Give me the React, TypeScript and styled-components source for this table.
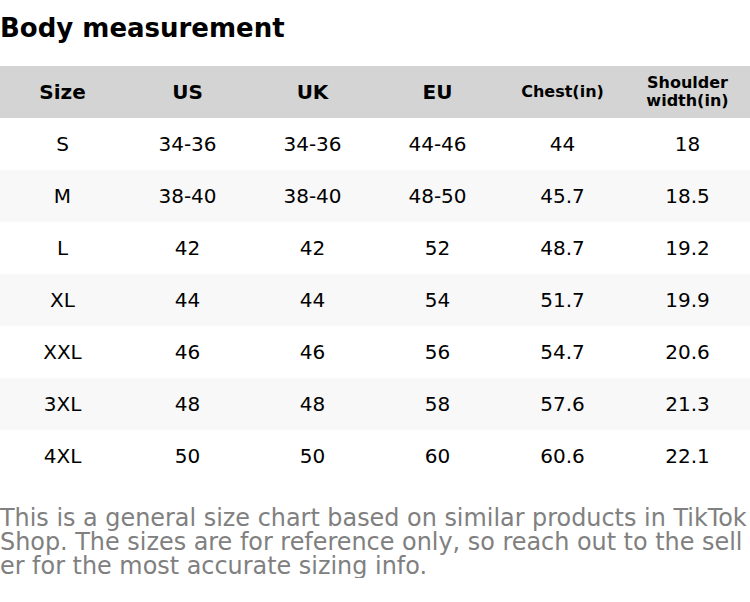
import React from "react";
import styled, { createGlobalStyle } from "styled-components";

const Global = createGlobalStyle`
  html, body { margin: 0; padding: 0; background: #fff; }
  body { font-family: "DejaVu Sans", sans-serif; }
`;

const Page = styled.div`
  width: 750px;
  display: flex;
  flex-direction: column;
`;

const Title = styled.h1`
  margin: 0;
  height: 66px;
  display: flex;
  align-items: center;
  padding-bottom: 10px;
  box-sizing: border-box;
  font-size: 26px;
  font-weight: bold;
  color: #000;
`;

const Row = styled.div<{ $bg: string }>`
  display: grid;
  grid-template-columns: repeat(6, 125px);
  height: 52px;
  background: ${(p) => p.$bg};
`;

const Cell = styled.div<{ $head?: boolean; $small?: boolean }>`
  display: flex;
  align-items: center;
  justify-content: center;
  text-align: center;
  color: #000;
  font-size: ${(p) => (p.$small ? "16px" : "20px")};
  font-weight: ${(p) => (p.$head ? "bold" : "normal")};
  line-height: ${(p) => (p.$small ? "18px" : "24px")};
`;

const Note = styled.p`
  margin: 24px 0 0;
  font-size: 23.9px;
  line-height: 24px;
  font-family: "DejaVu Sans", sans-serif;
  color: #808080;
  word-break: break-all;
`;

const heads = ["Size", "US", "UK", "EU", "Chest(in)", "Shoulder width(in)"];
const rows = [
  ["S", "34-36", "34-36", "44-46", "44", "18"],
  ["M", "38-40", "38-40", "48-50", "45.7", "18.5"],
  ["L", "42", "42", "52", "48.7", "19.2"],
  ["XL", "44", "44", "54", "51.7", "19.9"],
  ["XXL", "46", "46", "56", "54.7", "20.6"],
  ["3XL", "48", "48", "58", "57.6", "21.3"],
  ["4XL", "50", "50", "60", "60.6", "22.1"],
];

export default function App() {
  return (
    <Page>
      <Global />
      <Title>Body measurement</Title>
      <Row $bg="#d4d4d4">
        {heads.map((h, i) => (
          <Cell key={h} $head $small={i >= 4}>
            {h}
          </Cell>
        ))}
      </Row>
      {rows.map((r, i) => (
        <Row key={r[0]} $bg={i % 2 ? "#f8f8f8" : "#fff"}>
          {r.map((c, j) => (
            <Cell key={j}>{c}</Cell>
          ))}
        </Row>
      ))}
      <Note>
        This is a general size chart based on similar products in TikTok Shop. The sizes are for reference only, so reach out to the seller for the most accurate sizing info.
      </Note>
    </Page>
  );
}
